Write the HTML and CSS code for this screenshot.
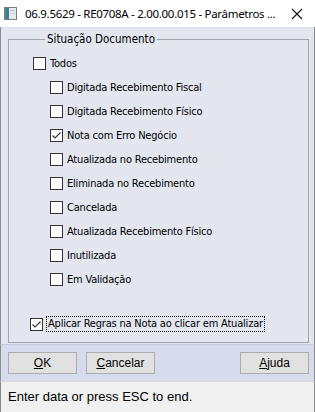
FILE: index.html
```html
<!DOCTYPE html>
<html lang="pt">
<head>
<meta charset="UTF-8">
<meta name="viewport" content="width=device-width, initial-scale=1.0">
<title>Parâmetros</title>
<link rel="stylesheet" href="styles.css">
</head>
<body>

<div class="window">
  <div class="titlebar">
    <svg class="app-icon" width="13" height="13" viewBox="0 0 13 13">
      <rect x="0.5" y="0.5" width="12" height="12" fill="#e6eaee" stroke="#7d7d7d"/>
      <rect x="1" y="1" width="4" height="11" fill="#3f8f77"/>
      <rect x="3" y="1" width="2" height="11" fill="#3b73b5"/>
      <rect x="6" y="3" width="5" height="1" fill="#b8c4d0"/>
      <rect x="6" y="6" width="5" height="1" fill="#c9d2da"/>
    </svg>
    <span class="title">06.9.5629 - RE0708A - 2.00.00.015 - Parâmetros ...</span>
    <svg class="close" width="12" height="12" viewBox="0 0 12 12">
      <path d="M1 1 L11 11 M11 1 L1 11" stroke="#111" stroke-width="1.1" fill="none"/>
    </svg>
  </div>

  <div class="client">
    <fieldset class="group">
      <legend>Situação Documento</legend>

      <label class="opt">
        <span class="box"></span>Todos
      </label>

      <div class="sub">
        <label class="opt"><span class="box"></span>Digitada Recebimento Fiscal</label>
        <label class="opt"><span class="box"></span>Digitada Recebimento Físico</label>
        <label class="opt"><span class="box checked"><svg width="11" height="11" viewBox="0 0 11 11"><path d="M1.5 5.5 L4 8 L9.5 2.5" stroke="#333" stroke-width="1.1" fill="none"/></svg></span>Nota com Erro Negócio</label>
        <label class="opt"><span class="box"></span>Atualizada no Recebimento</label>
        <label class="opt"><span class="box"></span>Eliminada no Recebimento</label>
        <label class="opt"><span class="box"></span>Cancelada</label>
        <label class="opt"><span class="box"></span>Atualizada Recebimento Físico</label>
        <label class="opt"><span class="box"></span>Inutilizada</label>
        <label class="opt"><span class="box"></span>Em Validação</label>
      </div>

      <label class="opt apply">
        <span class="box checked"><svg width="11" height="11" viewBox="0 0 11 11"><path d="M1.5 5.5 L4 8 L9.5 2.5" stroke="#333" stroke-width="1.1" fill="none"/></svg></span><span class="focus">Aplicar Regras na Nota ao clicar em Atualizar</span>
      </label>
    </fieldset>
  </div>

  <div class="buttons">
    <button class="btn"><u>O</u>K</button>
    <button class="btn"><u>C</u>ancelar</button>
    <span class="spacer"></span>
    <button class="btn"><u>A</u>juda</button>
  </div>

  <div class="status">Enter data or press ESC to end.</div>
</div>

</body>
</html>
```

FILE: styles.css
```css
body {
  margin: 0;
  padding: 0;
  background: #ffffff;
}
.window {
  width: 315px;
  height: 412px;
  display: flex;
  flex-direction: column;
  overflow: hidden;
}
.titlebar {
  height: 27px;
  flex: none;
  display: flex;
  align-items: center;
  background: #ffffff;
  font-family: "Noto Sans", sans-serif;
  font-size: 11.5px;
  letter-spacing: -0.3px;
  color: #000;
}
.app-icon {
  margin-left: 4px;
  margin-right: 8px;
}
.title {
  flex: 1;
  white-space: nowrap;
}
.close {
  margin-right: 12px;
}
.client {
  flex: none;
  background: #e3e6ef;
  border-left: 1px solid #8a8a8a;
  border-right: 1px solid #8a8a8a;
  padding: 5px 5px 1px 7px;
  font-family: "DejaVu Sans", sans-serif;
  font-stretch: condensed;
  font-size: 11px;
  letter-spacing: -0.2px;
  color: #000;
}
.group {
  margin: 0;
  padding: 5px 0 6px 24px;
  border: 1px solid #a2a5ad;
  min-width: 0;
}
.group legend {
  margin-left: 12px;
  padding: 0 2px;
  line-height: 14px;
  font-size: 11.5px;
  letter-spacing: 0;
}
.opt {
  display: flex;
  align-items: center;
  height: 24px;
  white-space: nowrap;
}
.box {
  width: 11px;
  height: 11px;
  border: 1px solid #333333;
  background: #ffffff;
  margin-right: 4px;
  flex: none;
  display: flex;
}
.sub {
  padding-left: 17px;
}
.apply {
  margin-top: 21px;
  margin-left: -3px;
}
.apply .box {
  margin-right: 3px;
}
.focus {
  border: 1px dotted #000;
  padding: 0 1px;
  line-height: 14px;
}
.buttons {
  flex: none;
  display: flex;
  gap: 9px;
  background: #d6dcee;
  border-top: 1px solid #c3cadb;
  border-left: 1px solid #8a8a8a;
  border-right: 1px solid #8a8a8a;
  padding: 7px 5px 7px 7px;
}
.spacer {
  flex: 1;
}
.btn {
  width: 69px;
  height: 22px;
  background: #e1e1e1;
  border: 1px solid #adadad;
  border-radius: 0;
  padding: 0;
  font-family: "Liberation Sans", Arial, sans-serif;
  font-size: 12px;
  color: #000;
}
.status {
  flex: 1;
  background: #f0f0f0;
  border-top: 1px solid #dadada;
  border-left: 1px solid #8a8a8a;
  border-right: 1px solid #8a8a8a;
  padding: 7px 7px 0 7px;
  font-family: "Liberation Sans", Arial, sans-serif;
  font-size: 13px;
  color: #000;
}
```
